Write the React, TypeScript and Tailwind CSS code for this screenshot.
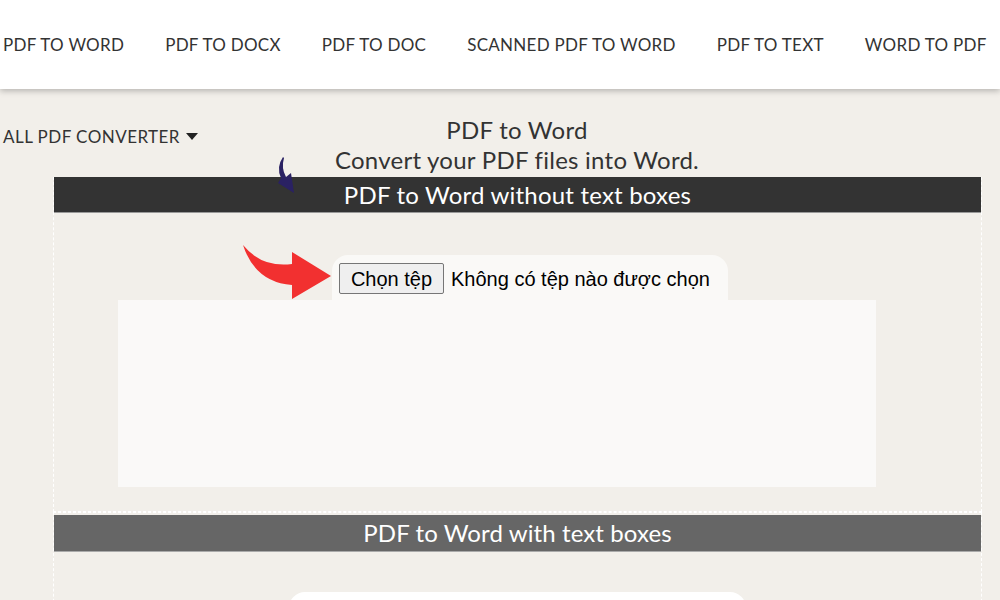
import React from "react";

const navItems = ["PDF TO WORD", "PDF TO DOCX", "PDF TO DOC", "SCANNED PDF TO WORD", "PDF TO TEXT", "WORD TO PDF"];

function RedArrow() {
  return (
    <svg className="absolute left-[240px] top-[240px]" width="95" height="62" viewBox="240 240 95 62">
      <path
        d="M243 245 Q262 268 292 264 L292 252 L331 276 L292 299 L292 285 Q255 282 243 245 Z"
        fill="#f23030"
      />
    </svg>
  );
}

function NavyArrow() {
  return (
    <svg className="absolute left-[270px] top-[150px]" width="30" height="45" viewBox="270 150 30 45">
      <path d="M283 157 Q276 167 281 178 L278 183 L294 193 L291 173 L286 177 Q281 168 284 158 Z" fill="#2a2163" />
    </svg>
  );
}

export default function App() {
  return (
    <div className="relative w-[1000px] h-[600px] overflow-hidden bg-[#f2efea] font-['Lato',sans-serif] text-[#333]">
      <header className="h-[89px] bg-white shadow-[0_2px_6px_rgba(0,0,0,0.25)] flex items-center pl-[3px] gap-[41px] relative z-10">
        {navItems.map((n) => (
          <span key={n} className="text-[17px] tracking-[0.28px] whitespace-nowrap text-[#333]">
            {n}
          </span>
        ))}
      </header>

      <div className="grid grid-cols-[53px_928px]">
        <div className="pt-[35px] pl-[3px] whitespace-nowrap text-[17px] tracking-[0.45px] flex items-center gap-[6px] h-fit">
          ALL PDF CONVERTER
          <span className="inline-block w-0 h-0 border-l-[6px] border-r-[6px] border-t-[7px] border-l-transparent border-r-transparent border-t-[#222]" />
        </div>
        <div className="pt-[26px] text-center text-[24px] tracking-[0.25px] leading-[30px] text-[#333]">
          <div>PDF to Word</div>
          <div>Convert your PDF files into Word.</div>
        </div>
      </div>

      <div className="ml-[53px] w-[929px] mt-[2px]">
        <section className="border-x border-b border-dashed border-white h-[335px]">
          <div className="h-[36px] bg-[#333] border-b border-[#999] text-white text-[24px] tracking-[0.2px] flex items-center justify-center">
            PDF to Word without text boxes
          </div>
          <div className="mt-[42px] ml-[278px] w-[396px] h-[45px] bg-[#faf9f7] rounded-t-[16px] pt-[8px] pl-[7px] flex items-start gap-[7px] font-['Liberation_Sans',Arial,sans-serif] text-[20px] text-black">
            <span className="h-[31px] w-[105px] flex items-center justify-center bg-[#efefef] border border-[#767676] rounded-[2px]">
              Chọn tệp
            </span>
            <span className="h-[31px] flex items-center">Không có tệp nào được chọn</span>
          </div>
          <div className="ml-[64px] w-[758px] h-[187px] bg-[#faf9f8]" />
        </section>
        <section className="border-x border-t border-dashed border-white h-[100px]">
          <div className="mt-[2px] h-[37px] bg-[#666] border-b border-[#aaa] text-white text-[24px] tracking-[0.1px] flex items-center justify-center">
            PDF to Word with text boxes
          </div>
          <div className="mt-[40px] ml-[235px] w-[457px] h-[40px] bg-white rounded-t-[16px]" />
        </section>
      </div>

      <NavyArrow />
      <RedArrow />
    </div>
  );
}
